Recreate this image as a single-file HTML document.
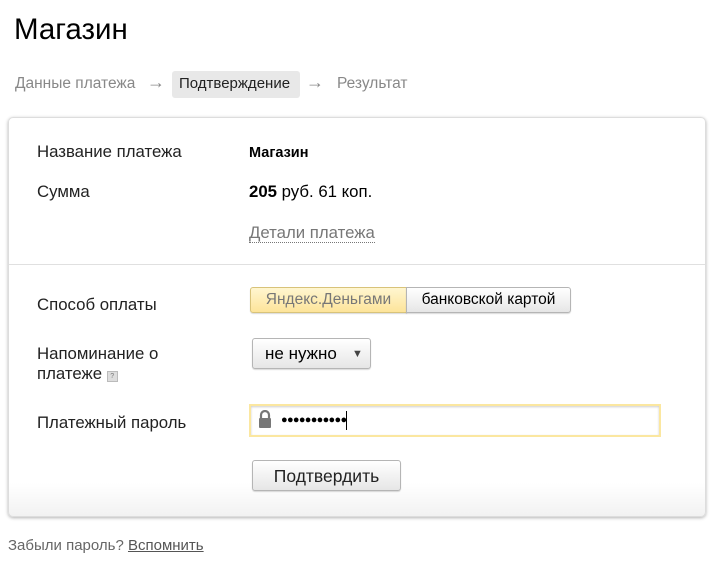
<!DOCTYPE html>
<html><head><meta charset="utf-8"><style>
body{margin:0;width:719px;height:576px;background:#fff;font-family:"Liberation Sans",Arial,sans-serif;position:relative;overflow:hidden;color:#000}
.a{position:absolute;white-space:nowrap}
h1{position:absolute;left:14px;top:13px;margin:0;font-size:29.5px;font-weight:normal}
.bc{font-size:15.5px;color:#888;top:75px}
.card{position:absolute;left:8px;top:117px;width:696px;height:398px;border:1px solid #ddd;border-radius:5px;background:linear-gradient(#fff 365px,#f2f2f2 398px);box-shadow:0 1px 3px rgba(0,0,0,.3)}
.lbl{font-size:16.8px;color:#222}
.btn{position:absolute;border:1px solid #b5b5b5;border-radius:3px;background:linear-gradient(#fff,#e6e6e6);box-shadow:0 1px 1px rgba(0,0,0,.15);font-size:15px;text-align:center;box-sizing:border-box}
</style></head><body>
<h1>Магазин</h1>
<div class="a bc" style="left:15px">Данные платежа</div>
<div class="a bc" style="left:147px;top:72px;font-size:18px">→</div>
<div class="a" style="left:172px;top:71px;width:128px;height:27px;background:#e8e8e8;border-radius:3px"></div>
<div class="a bc" style="left:179px;color:#222;font-size:15px">Подтверждение</div>
<div class="a bc" style="left:306px;top:72px;font-size:18px">→</div>
<div class="a bc" style="left:337px">Результат</div>
<div class="card"></div>
<div class="a" style="left:9px;top:264px;width:696px;height:1px;background:#e0e0e0"></div>
<div class="a lbl" style="left:37px;top:142px">Название платежа</div>
<div class="a" style="left:249px;top:145px;font-size:14.5px;font-weight:bold">Магазин</div>
<div class="a lbl" style="left:37px;top:182px">Сумма</div>
<div class="a" style="left:249px;top:182px;font-size:16.8px"><b>205</b> руб. 61 коп.</div>
<div class="a" style="left:249px;top:223px;font-size:16.8px;color:#777;border-bottom:1px dotted #777;line-height:19px">Детали платежа</div>
<div class="a lbl" style="left:37px;top:295px">Способ оплаты</div>
<div class="btn" style="left:250px;top:287px;width:157px;height:26px;line-height:24px;background:linear-gradient(#fff6d0,#fde49a);color:#777;border-color:#d8c37a;border-radius:3px 0 0 3px;font-size:15.5px">Яндекс.Деньгами</div>
<div class="btn" style="left:406px;top:287px;width:165px;height:26px;line-height:24px;font-size:15.5px;border-radius:0 3px 3px 0">банковской картой</div>
<div class="a lbl" style="left:37px;top:344px;line-height:20px">Напоминание о<br>платеже <span style="display:inline-block;width:9px;height:9px;background:#ddd;border:1px solid #bbb;font-size:7px;line-height:9px;text-align:center;color:#777;vertical-align:1px">?</span></div>
<div class="btn" style="left:252px;top:338px;width:119px;height:31px;line-height:30px;text-align:left;padding-left:12px;font-size:17px">не нужно <span style="position:absolute;left:99px;font-size:11px;color:#444">▼</span></div>
<div class="a lbl" style="left:37px;top:413px">Платежный пароль</div>
<div class="a" style="left:249px;top:404px;width:408px;height:29px;border:2px solid #fbe7a0;box-shadow:inset 0 1px 2px rgba(0,0,0,.2)"></div>
<svg class="a" style="left:258px;top:410px" width="14" height="18" viewBox="0 0 14 18"><path d="M3 8V5a4 4 0 0 1 8 0v3" fill="none" stroke="#777" stroke-width="2.2"/><rect x="1" y="8" width="12" height="10" rx="1" fill="#777"/></svg>
<div class="a" style="left:281px;top:410px;font-size:11px;letter-spacing:-0.7px;line-height:20px">●●●●●●●●●●●</div>
<div class="a" style="left:346px;top:411px;width:1px;height:19px;background:#000"></div>
<div class="btn" style="left:252px;top:460px;width:149px;height:31px;line-height:30px;font-size:17.5px;color:#222">Подтвердить</div>
<div class="a" style="left:8px;top:537px;font-size:15px;color:#666">Забыли пароль? <span style="text-decoration:underline;color:#555">Вспомнить</span></div>
</body></html>
